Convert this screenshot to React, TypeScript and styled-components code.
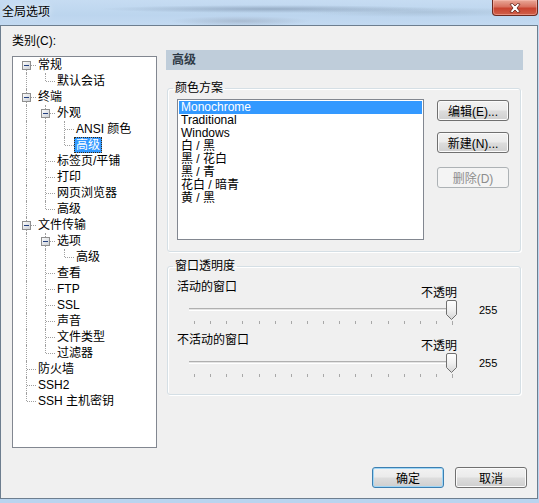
import React from "react"
import styled, { createGlobalStyle } from "styled-components"

const GlobalStyle = createGlobalStyle`
  html, body {
    margin: 0;
    padding: 0;
  }
  body {
    font-family: "Liberation Sans", "Noto Sans CJK SC", sans-serif;
    font-size: 12px;
    color: #000;
    background: #bcd6ef;
  }
  * {
    box-sizing: border-box;
  }
`

type TreeNode = {
  label: string
  children?: TreeNode[]
  selected?: boolean
}

const tree: TreeNode[] = [
  { label: "常规", children: [{ label: "默认会话" }] },
  {
    label: "终端",
    children: [
      {
        label: "外观",
        children: [{ label: "ANSI 颜色" }, { label: "高级", selected: true }],
      },
      { label: "标签页/平铺" },
      { label: "打印" },
      { label: "网页浏览器" },
      { label: "高级" },
    ],
  },
  {
    label: "文件传输",
    children: [
      { label: "选项", children: [{ label: "高级" }] },
      { label: "查看" },
      { label: "FTP" },
      { label: "SSL" },
      { label: "声音" },
      { label: "文件类型" },
      { label: "过滤器" },
    ],
  },
  { label: "防火墙" },
  { label: "SSH2" },
  { label: "SSH 主机密钥" },
]

type FlatRow = {
  node: TreeNode
  guides: boolean[]
  hasNext: boolean
  isFirstRoot: boolean
}

const flatten = (nodes: TreeNode[], guides: boolean[], out: FlatRow[]) => {
  nodes.forEach((node, i) => {
    const hasNext = i < nodes.length - 1
    out.push({ node, guides, hasNext, isFirstRoot: guides.length === 0 && i === 0 })
    if (node.children) flatten(node.children, [...guides, hasNext], out)
  })
  return out
}

const rows = flatten(tree, [], [])

const schemes = [
  "Monochrome",
  "Traditional",
  "Windows",
  "白 / 黑",
  "黑 / 花白",
  "黑 / 青",
  "花白 / 暗青",
  "黄 / 黑",
]

const Window = styled.div`
  width: 539px;
  height: 503px;
  display: flex;
  flex-direction: column;
  background: linear-gradient(180deg, #c4daf1 0%, #b9d4ef 100%);
  overflow: hidden;
`

const TitleBar = styled.div`
  height: 25px;
  flex: none;
  display: flex;
  justify-content: space-between;
  align-items: flex-start;
  background:
    radial-gradient(ellipse 70px 5px at 240px 21px, rgba(150, 165, 185, 0.55), transparent),
    radial-gradient(ellipse 170px 4px at 270px 9px, rgba(110, 130, 155, 0.5), transparent),
    radial-gradient(ellipse 120px 5px at 420px 12px, rgba(140, 160, 180, 0.35), transparent),
    linear-gradient(180deg, #c6dcf2 0%, #bcd5ee 60%, #c3daf1 100%);
`

const Title = styled.div`
  padding: 5px 0 0 2px;
  line-height: 14px;
  text-shadow: 0 0 6px rgba(255, 255, 255, 0.9);
`

const CloseButton = styled.div`
  width: 46px;
  height: 16px;
  margin-right: 1px;
  display: flex;
  align-items: center;
  justify-content: center;
  border: 1px solid #6b2a20;
  border-top: none;
  border-radius: 0 0 4px 4px;
  background: linear-gradient(180deg, #e9a898 0%, #d8715f 45%, #c8432f 55%, #d0604a 100%);
  box-shadow: inset 0 0 0 1px rgba(255, 200, 190, 0.45);
`

const Client = styled.div`
  flex: 1;
  margin: 0 1px 4px 0;
  border: 1px solid #6d7e8f;
  background: #f0f0f0;
  display: flex;
  flex-direction: column;
  padding: 8px 10px 10px 11px;
`

const Main = styled.div`
  display: grid;
  grid-template-columns: 145px 357px;
  column-gap: 9px;
`

const LeftColumn = styled.div`
  display: flex;
  flex-direction: column;
`

const Caption = styled.div`
  line-height: 14px;
  margin-bottom: 8px;
`

const TreeBox = styled.div`
  height: 392px;
  border: 1px solid #828790;
  background: #fff;
`

const TreeRow = styled.div`
  height: 16px;
  display: flex;
  padding-left: 4px;
`

const Guide = styled.div<{ $line: boolean }>`
  width: 19px;
  flex: none;
  position: relative;
  &::before {
    content: "";
    display: ${(p) => (p.$line ? "block" : "none")};
    position: absolute;
    left: 9px;
    top: 0;
    bottom: 0;
    border-left: 1px dotted #a0a0a0;
  }
`

const Connector = styled.div<{ $top: boolean; $bottom: boolean }>`
  width: 19px;
  flex: none;
  position: relative;
  &::before {
    content: "";
    position: absolute;
    left: 9px;
    top: ${(p) => (p.$top ? "0" : "8px")};
    bottom: ${(p) => (p.$bottom ? "0" : "8px")};
    border-left: 1px dotted #a0a0a0;
  }
  &::after {
    content: "";
    position: absolute;
    left: 10px;
    right: 0;
    top: 8px;
    border-top: 1px dotted #a0a0a0;
  }
`

const Expander = styled.svg`
  position: absolute;
  left: 5px;
  top: 4px;
  z-index: 1;
`

const NodeLabel = styled.span<{ $selected?: boolean }>`
  height: 16px;
  line-height: 14px;
  padding: 0 1px;
  white-space: nowrap;
  border: 1px ${(p) => (p.$selected ? "dotted #3d2a10" : "solid transparent")};
  background: ${(p) => (p.$selected ? "#3399ff" : "transparent")};
  color: ${(p) => (p.$selected ? "#fff" : "#000")};
`

const RightColumn = styled.div`
  margin-top: 16px;
  display: flex;
  flex-direction: column;
`

const PageHeader = styled.div`
  height: 20px;
  line-height: 20px;
  padding-left: 6px;
  background: #bfcdda;
  color: #2e3a46;
  font-weight: bold;
`

const Group = styled.fieldset<{ $gap: number; $bottom: number }>`
  margin: ${(p) => p.$gap}px 2px 0 1px;
  padding: 5px 9px ${(p) => p.$bottom}px 9px;
  border: 1px solid #d5dfe5;
  border-radius: 3px;
  box-shadow: inset 1px 1px 0 #fff, 1px 1px 0 #fff;
  min-width: 0;
`

const Legend = styled.legend`
  margin-left: -4px;
  padding: 0 2px;
  line-height: 12px;
  height: 12px;
`

const SchemeRow = styled.div`
  display: flex;
  align-items: flex-start;
`

const ListBox = styled.div`
  width: 247px;
  height: 141px;
  border: 1px solid #828790;
  background: #fff;
  padding: 1px 1px 0 1px;
`

const ListItem = styled.div<{ $selected?: boolean }>`
  height: 13px;
  line-height: 13px;
  padding-left: 2px;
  white-space: nowrap;
  background: ${(p) => (p.$selected ? "#3399ff" : "transparent")};
  color: ${(p) => (p.$selected ? "#fff" : "#000")};
`

const ButtonColumn = styled.div`
  margin-left: 13px;
  display: flex;
  flex-direction: column;
`

const Button = styled.button<{ $default?: boolean; $top?: number }>`
  width: 72px;
  height: 21px;
  margin-top: ${(p) => p.$top ?? 0}px;
  padding: 0;
  font: inherit;
  color: #000;
  border: 1px solid ${(p) => (p.$default ? "#3c7fb1" : "#707070")};
  border-radius: 3px;
  background: linear-gradient(180deg, #f2f2f2 0%, #ebebeb 48%, #dddddd 52%, #cfcfcf 100%);
  box-shadow: inset 0 0 0 1px ${(p) => (p.$default ? "#9fd6f6" : "#fbfbfb")};

  &:disabled {
    border-color: #adb2b5;
    background: #f4f4f4;
    color: #8d8d8d;
    box-shadow: none;
  }
`

const SliderBlock = styled.div<{ $gap: number }>`
  margin-top: ${(p) => p.$gap}px;
  display: flex;
  flex-direction: column;
`

const SliderHead = styled.div`
  width: 280px;
  height: 20px;
  display: flex;
  justify-content: space-between;
`

const SliderLabel = styled.span`
  align-self: flex-start;
  line-height: 14px;
`

const SliderEnd = styled.span`
  align-self: flex-end;
  line-height: 14px;
`

const TrackRow = styled.div`
  display: flex;
  align-items: center;
`

const Slider = styled.div`
  width: 280px;
  height: 20px;
  position: relative;
`

const Track = styled.div`
  position: absolute;
  left: 12px;
  right: 1px;
  top: 8px;
  height: 3px;
  border-top: 1px solid #b0b0b0;
  border-bottom: 1px solid #fff;
  background: #e4e4e4;
`

const Thumb = styled.svg`
  position: absolute;
  top: 0;
`

const Value = styled.span`
  margin-left: 22px;
  line-height: 14px;
  font-size: 11px;
`

const Ticks = styled.div`
  width: 259px;
  height: 4px;
  margin: 1px 0 0 17px;
  display: flex;
  justify-content: space-between;
  align-items: flex-start;
`

const Tick = styled.i<{ $long?: boolean }>`
  width: 1px;
  height: ${(p) => (p.$long ? 4 : 3)}px;
  background: #a8a8a8;
`

const Footer = styled.div`
  margin-top: auto;
  display: flex;
  justify-content: flex-end;
  gap: 11px;
`

const ExpanderIcon = () => (
  <Expander width="9" height="9" viewBox="0 0 9 9">
    <defs>
      <linearGradient id="exp" x1="0" y1="0" x2="1" y2="1">
        <stop offset="0" stopColor="#ffffff" />
        <stop offset="1" stopColor="#c9cdd3" />
      </linearGradient>
    </defs>
    <rect x="0.5" y="0.5" width="8" height="8" fill="url(#exp)" stroke="#8f8f8f" />
    <path d="M2 4.5H7" stroke="#23407f" />
  </Expander>
)

const ThumbIcon = ({ left }: { left: string }) => (
  <Thumb width="11" height="20" viewBox="0 0 11 20" style={{ left }}>
    <defs>
      <linearGradient id="thumb" x1="0" y1="0" x2="0" y2="1">
        <stop offset="0" stopColor="#ffffff" />
        <stop offset="0.5" stopColor="#f0f0f0" />
        <stop offset="1" stopColor="#d4d4d4" />
      </linearGradient>
    </defs>
    <path
      d="M2 0.5H9A1.5 1.5 0 0 1 10.5 2V14.5L5.5 19.5L0.5 14.5V2A1.5 1.5 0 0 1 2 0.5Z"
      fill="url(#thumb)"
      stroke="#707070"
    />
  </Thumb>
)

const Opacity = ({ label, value }: { label: string; value: number }) => {
  const left = `${(value / 255) * (280 - 11 - 12) + 12}px`
  return (
    <>
      <SliderHead>
        <SliderLabel>{label}</SliderLabel>
        <SliderEnd>不透明</SliderEnd>
      </SliderHead>
      <TrackRow>
        <Slider>
          <Track />
          <ThumbIcon left={left} />
        </Slider>
        <Value>{value}</Value>
      </TrackRow>
      <Ticks>
        {Array.from({ length: 17 }).map((_, i) => (
          <Tick key={i} $long={i === 16} />
        ))}
      </Ticks>
    </>
  )
}

export default function App() {
  return (
    <>
      <GlobalStyle />
      <Window>
        <TitleBar>
          <Title>全局选项</Title>
          <CloseButton>
            <svg width="12" height="10" viewBox="0 0 12 10">
              <path
                d="M1 1.2L3.4 0.5L6 3L8.6 0.5L11 1.2L8 5L11 8.8L8.6 9.5L6 7L3.4 9.5L1 8.8L4 5Z"
                fill="#fff"
                stroke="#5a1d14"
                strokeWidth="0.8"
                strokeLinejoin="round"
              />
            </svg>
          </CloseButton>
        </TitleBar>
        <Client>
          <Main>
            <LeftColumn>
              <Caption>类别(C):</Caption>
              <TreeBox>
                {rows.map((row, i) => (
                  <TreeRow key={i}>
                    {row.guides.map((g, j) => (
                      <Guide key={j} $line={g} />
                    ))}
                    <Connector $top={!row.isFirstRoot} $bottom={row.hasNext}>
                      {row.node.children && <ExpanderIcon />}
                    </Connector>
                    <NodeLabel $selected={row.node.selected}>{row.node.label}</NodeLabel>
                  </TreeRow>
                ))}
              </TreeBox>
            </LeftColumn>
            <RightColumn>
              <PageHeader>高级</PageHeader>
              <Group $gap={12} $bottom={11}>
                <Legend>颜色方案</Legend>
                <SchemeRow>
                  <ListBox>
                    {schemes.map((s, i) => (
                      <ListItem key={s} $selected={i === 0}>
                        {s}
                      </ListItem>
                    ))}
                  </ListBox>
                  <ButtonColumn>
                    <Button $top={1}>编辑(E)...</Button>
                    <Button $top={11}>新建(N)...</Button>
                    <Button $top={14} disabled>
                      删除(D)
                    </Button>
                  </ButtonColumn>
                </SchemeRow>
              </Group>
              <Group $gap={8} $bottom={16}>
                <Legend>窗口透明度</Legend>
                <SliderBlock $gap={3}>
                  <Opacity label="活动的窗口" value={255} />
                </SliderBlock>
                <SliderBlock $gap={8}>
                  <Opacity label="不活动的窗口" value={255} />
                </SliderBlock>
              </Group>
            </RightColumn>
          </Main>
          <Footer>
            <Button $default>确定</Button>
            <Button>取消</Button>
          </Footer>
        </Client>
      </Window>
    </>
  )
}
